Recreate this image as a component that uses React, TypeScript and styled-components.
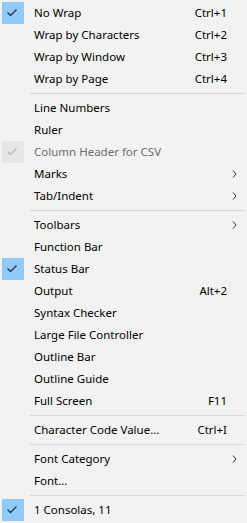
import React from 'react';
import styled, { createGlobalStyle } from 'styled-components';

const GlobalStyle = createGlobalStyle`
  html, body {
    margin: 0;
    padding: 0;
    background: #f2f2f2;
  }
  body {
    font-family: "Noto Sans", "Open Sans", "DejaVu Sans", sans-serif;
    font-size: 11.5px;
    color: #000;
  }
`;

const Menu = styled.div`
  width: 247px;
  height: 523px;
  box-sizing: border-box;
  padding: 2px 0;
  background: #f2f2f2;
  display: flex;
  flex-direction: column;
`;

const Row = styled.div<{ $disabled?: boolean }>`
  display: grid;
  grid-template-columns: 22px 1fr auto 20px;
  align-items: center;
  height: 22px;
  padding-left: 2px;
  color: ${p => (p.$disabled ? '#6d6d6d' : '#000')};
`;

const CheckBox = styled.div<{ $on?: boolean; $disabled?: boolean }>`
  width: 22px;
  height: 22px;
  display: flex;
  align-items: center;
  justify-content: center;
  background: ${p => (!p.$on ? 'transparent' : p.$disabled ? '#e6e6e6' : '#91c9f7')};
`;

const Label = styled.span`
  padding-left: 10px;
  white-space: nowrap;
  line-height: 22px;
`;

const Shortcut = styled.span`
  text-align: right;
  white-space: nowrap;
  line-height: 22px;
`;

const ArrowCell = styled.div`
  display: flex;
  align-items: center;
  padding-left: 5px;
`;

const Separator = styled.div`
  height: 7px;
  display: flex;
  align-items: center;
  padding-left: 30px;
  padding-right: 2px;

  &::after {
    content: '';
    flex: 1;
    height: 1px;
    background: #d7d7d7;
  }
`;

type Item =
  | { sep: true }
  | {
      sep?: false;
      label: string;
      shortcut?: string;
      checked?: boolean;
      disabled?: boolean;
      submenu?: boolean;
    };

const items: Item[] = [
  { label: 'No Wrap', shortcut: 'Ctrl+1', checked: true },
  { label: 'Wrap by Characters', shortcut: 'Ctrl+2' },
  { label: 'Wrap by Window', shortcut: 'Ctrl+3' },
  { label: 'Wrap by Page', shortcut: 'Ctrl+4' },
  { sep: true },
  { label: 'Line Numbers' },
  { label: 'Ruler' },
  { label: 'Column Header for CSV', checked: true, disabled: true },
  { label: 'Marks', submenu: true },
  { label: 'Tab/Indent', submenu: true },
  { sep: true },
  { label: 'Toolbars', submenu: true },
  { label: 'Function Bar' },
  { label: 'Status Bar', checked: true },
  { label: 'Output', shortcut: 'Alt+2' },
  { label: 'Syntax Checker' },
  { label: 'Large File Controller' },
  { label: 'Outline Bar' },
  { label: 'Outline Guide' },
  { label: 'Full Screen', shortcut: 'F11' },
  { sep: true },
  { label: 'Character Code Value...', shortcut: 'Ctrl+I' },
  { sep: true },
  { label: 'Font Category', submenu: true },
  { label: 'Font...' },
  { sep: true },
  { label: '1 Consolas, 11', checked: true },
];

const Check = ({ color }: { color: string }) => (
  <svg width="22" height="22" viewBox="0 0 22 22">
    <polyline points="5.5,10.5 8.5,13.5 14.5,7.5" fill="none" stroke={color} strokeWidth="1.3" />
  </svg>
);

const Chevron = () => (
  <svg width="5" height="8" viewBox="0 0 5 8">
    <polyline points="1,0.5 4,4 1,7.5" fill="none" stroke="#333" strokeWidth="1" />
  </svg>
);

export default function App() {
  return (
    <>
      <GlobalStyle />
      <Menu>
        {items.map((it, i) =>
          it.sep ? (
            <Separator key={i} />
          ) : (
            <Row key={i} $disabled={it.disabled}>
              <CheckBox $on={it.checked} $disabled={it.disabled}>
                {it.checked && <Check color={it.disabled ? '#b8b8b8' : '#1e3553'} />}
              </CheckBox>
              <Label>{it.label}</Label>
              <Shortcut>{it.shortcut}</Shortcut>
              <ArrowCell>{it.submenu && <Chevron />}</ArrowCell>
            </Row>
          )
        )}
      </Menu>
    </>
  );
}
